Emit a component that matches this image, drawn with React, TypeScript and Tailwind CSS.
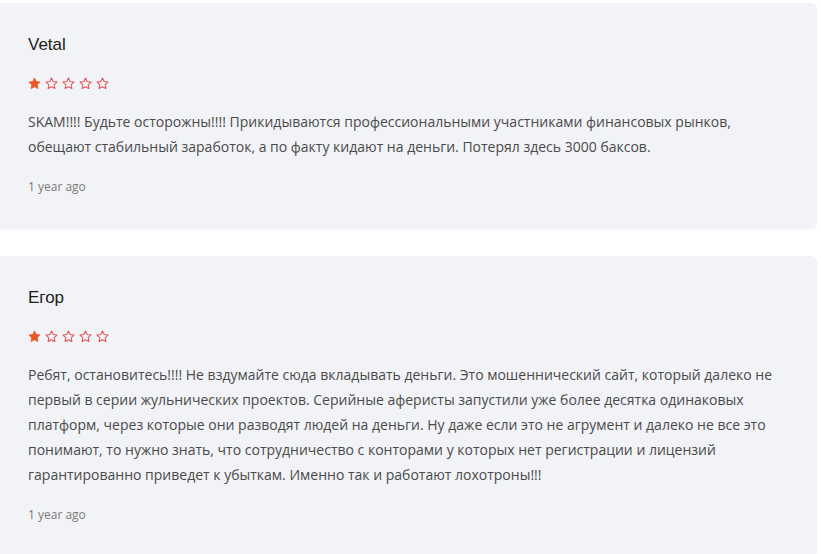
import React from "react";

type Review = {
  name: string;
  rating: number;
  text: string;
  time: string;
};

const reviews: Review[] = [
  {
    name: "Vetal",
    rating: 1,
    text:
      "SKAM!!!! Будьте осторожны!!!! Прикидываются профессиональными участниками финансовых рынков, обещают стабильный заработок, а по факту кидают на деньги. Потерял здесь 3000 баксов.",
    time: "1 year ago",
  },
  {
    name: "Егор",
    rating: 1,
    text:
      "Ребят, остановитесь!!!! Не вздумайте сюда вкладывать деньги. Это мошеннический сайт, который далеко не первый в серии жульнических проектов. Серийные аферисты запустили уже более десятка одинаковых платформ, через которые они разводят людей на деньги. Ну даже если это не агрумент и далеко не все это понимают, то нужно знать, что сотрудничество с конторами у которых нет регистрации и лицензий гарантированно приведет к убыткам. Именно так и работают лохотроны!!!",
    time: "1 year ago",
  },
];

function Star({ filled }: { filled: boolean }) {
  return (
    <svg width="13" height="13" viewBox="0 0 24 24" className="block">
      <path
        d="M12 1.8l3.1 6.6 7.1.9-5.2 4.9 1.3 7.1L12 17.9l-6.3 3.4 1.3-7.1-5.2-4.9 7.1-.9z"
        fill={filled ? "#ee5524" : "none"}
        stroke={filled ? "#ee5524" : "#e0555a"}
        strokeWidth={filled ? 1.5 : 1.9}
        strokeLinejoin="round"
      />
    </svg>
  );
}

function ReviewCard({ review }: { review: Review }) {
  return (
    <div className="w-[817px] rounded-r-md bg-[#f2f3f6] pl-[28px] pr-[26px] pt-[30px] pb-[33px] shadow-[0_1px_2px_rgba(0,0,0,0.04)]">
      <div className="font-['Liberation_Sans',Arial,sans-serif] text-[17px] leading-6 text-[#1c1c1c]">
        {review.name}
      </div>
      <div className="mt-[20px] flex gap-[4px]">
        {[0, 1, 2, 3, 4].map((i) => (
          <Star key={i} filled={i < review.rating} />
        ))}
      </div>
      <p className="mt-[19px] font-['Open_Sans',sans-serif] text-[14px] leading-[25px] text-[#4a4a4a]">
        {review.text}
      </p>
      <div className="mt-[19px] font-['Open_Sans',sans-serif] text-[12px] leading-[18px] text-[#7a7a7a]">
        {review.time}
      </div>
    </div>
  );
}

export default function App() {
  return (
    <div className="flex min-h-[554px] w-[821px] flex-col gap-[27px] overflow-hidden bg-white pt-[3px]">
      {reviews.map((r, i) => (
        <ReviewCard key={i} review={r} />
      ))}
    </div>
  );
}
